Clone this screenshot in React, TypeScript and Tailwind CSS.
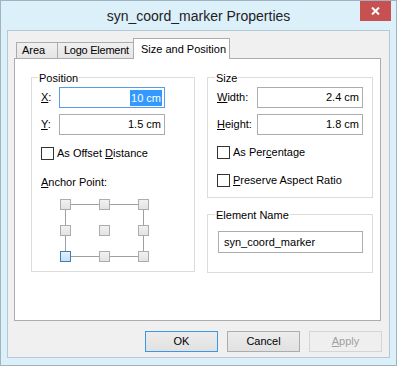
import React from 'react'

// Win8-style property dialog: "Size and Position" tab

const font = "font-['Liberation_Sans',Arial,sans-serif]"

function Field({ value, focused, align = 'right', className = '' }: { value: string; focused?: boolean; align?: 'left' | 'right'; className?: string }) {
  return (
    <div
      className={`flex items-center border bg-white ${focused ? 'border-[#569de5]' : 'border-[#acacac]'} ${align === 'right' ? 'justify-end pr-[2px]' : 'justify-start pl-[4px]'} ${className}`}
    >
      {focused ? (
        <span className="bg-[#3399ff] px-[1px] leading-[16px] text-white">{value}</span>
      ) : (
        <span className="px-[1px] text-[#000]">{value}</span>
      )}
    </div>
  )
}

function Check({ children, className = '' }: { children: React.ReactNode; className?: string }) {
  return (
    <div className={`flex h-[13px] items-center gap-[3px] ${className}`}>
      <div className="h-[13px] w-[13px] border border-[#333] bg-white" />
      <span className="leading-[13px]">{children}</span>
    </div>
  )
}

function GroupLabel({ children, className = '' }: { children: React.ReactNode; className?: string }) {
  return (
    <div className={`-mt-[7px] h-[14px] w-fit bg-white px-[1px] leading-[14px] ${className}`}>{children}</div>
  )
}

function AnchorGrid() {
  const cols = [0, 39, 78]
  const rows = [0, 26, 52]
  return (
    <svg width="89" height="63" viewBox="0 0 89 63">
      <g stroke="#a0a0a0" strokeWidth="1">
        <line x1="11" y1="5.5" x2="39" y2="5.5" />
        <line x1="50" y1="5.5" x2="78" y2="5.5" />
        <line x1="11" y1="57.5" x2="39" y2="57.5" />
        <line x1="50" y1="57.5" x2="78" y2="57.5" />
        <line x1="5.5" y1="11" x2="5.5" y2="26" />
        <line x1="5.5" y1="37" x2="5.5" y2="52" />
        <line x1="83.5" y1="11" x2="83.5" y2="26" />
        <line x1="83.5" y1="37" x2="83.5" y2="52" />
      </g>
      <defs>
        <linearGradient id="sq" x1="0" y1="0" x2="0" y2="1">
          <stop offset="0" stopColor="#f2f2f2" />
          <stop offset="1" stopColor="#e2e2e2" />
        </linearGradient>
        <linearGradient id="sqSel" x1="0" y1="0" x2="0" y2="1">
          <stop offset="0" stopColor="#e5f1fb" />
          <stop offset="1" stopColor="#c4e0fa" />
        </linearGradient>
      </defs>
      {rows.map((y, ri) =>
        cols.map((x, ci) => {
          const sel = ri === 2 && ci === 0
          return (
            <rect
              key={`${ri}-${ci}`}
              x={x + 0.5}
              y={y + 0.5}
              width="10"
              height="10"
              fill={sel ? 'url(#sqSel)' : 'url(#sq)'}
              stroke={sel ? '#3c7fb1' : '#acacac'}
            />
          )
        })
      )}
    </svg>
  )
}

export default function App() {
  return (
    <div className={`${font} flex h-[366px] w-[397px] flex-col border border-[#9fb3c2] bg-[#dcf0fa] text-[11px] text-black`}>
      {/* TITLE BAR */}
      <div className="grid h-[29px] grid-cols-[1fr_auto_1fr]">
        <div />
        <div className="self-center pt-[2px] text-[14px] text-[#222]">syn_coord_marker Properties</div>
        <div className="flex justify-end pr-[5px]">
          <div className="flex h-[20px] w-[31px] items-center justify-center bg-[#c75050]">
            <svg width="9" height="8" viewBox="0 0 9 8">
              <path d="M1 0.5 L8 7.5 M8 0.5 L1 7.5" stroke="#fff" strokeWidth="2" />
            </svg>
          </div>
        </div>
      </div>

      {/* CLIENT AREA */}
      <div className="mx-[6px] flex h-[328px] flex-col border border-[#b4c8d6] bg-[#f0f0f0]">
        {/* TABS */}
        <div className="mt-[7px] flex h-[20px] items-end pl-[8px]">
          <div className="flex h-[16px] w-[42px] items-center border border-b-0 border-[#acacac] bg-gradient-to-b from-[#f0f0f0] to-[#e5e5e5] pl-[5px]">
            Area
          </div>
          <div className="-ml-px flex h-[16px] w-[77px] items-center border border-b-0 border-[#acacac] bg-gradient-to-b from-[#f0f0f0] to-[#e5e5e5] pl-[6px] tracking-[-0.25px]">
            Logo Element
          </div>
          <div className="relative z-10 -mb-px -ml-px flex h-[21px] w-[97px] items-center border border-b-0 border-[#acacac] bg-white pl-[7px]">
            Size and Position
          </div>
        </div>

        {/* PANEL */}
        <div className="ml-[6px] flex h-[263px] w-[367px] gap-[12px] border border-[#acacac] bg-white pl-[16px] pt-[18px]">
          {/* POSITION */}
          <div className="flex h-[195px] w-[164px] flex-col border border-[#dcdcdc] pl-[9px]">
            <GroupLabel className="-ml-[3px]">Position</GroupLabel>
            <div className="mt-[2px] flex items-center">
              <span className="w-[18px]"><u>X</u>:</span>
              <Field value="10 cm" focused className="h-[21px] w-[106px]" />
            </div>
            <div className="mt-[6px] flex items-center">
              <span className="w-[18px]"><u>Y</u>:</span>
              <Field value="1.5 cm" className="h-[21px] w-[106px]" />
            </div>
            <Check className="mt-[12px]">
              As Offset <u>D</u>istance
            </Check>
            <div className="mt-[15px] h-[14px] leading-[14px]">
              <u>A</u>nchor Point:
            </div>
            <div className="ml-[19px] mt-[10px]">
              <AnchorGrid />
            </div>
          </div>

          {/* RIGHT COLUMN */}
          <div className="flex w-[166px] flex-col">
            <div className="flex h-[121px] flex-col border border-[#dcdcdc] pl-[9px]">
              <GroupLabel className="-ml-[2px]">Size</GroupLabel>
              <div className="mt-[2px] flex items-center">
                <span className="w-[40px]"><u>W</u>idth:</span>
                <Field value="2.4 cm" className="h-[21px] w-[106px]" />
              </div>
              <div className="mt-[6px] flex items-center">
                <span className="w-[40px]"><u>H</u>eight:</span>
                <Field value="1.8 cm" className="h-[21px] w-[106px]" />
              </div>
              <Check className="mt-[11px]">
                As Per<u>c</u>entage
              </Check>
              <Check className="mt-[15px]">
                <u>P</u>reserve Aspect Ratio
              </Check>
            </div>

            <div className="mt-[16px] flex h-[59px] flex-col border border-[#dcdcdc] pl-[10px]">
              <GroupLabel className="-ml-[3px]">Element Name</GroupLabel>
              <Field value="syn_coord_marker" align="left" className="mt-[9px] h-[22px] w-[145px]" />
            </div>
          </div>
        </div>

        {/* BUTTONS */}
        <div className="mt-[10px] flex justify-end gap-[9px] pr-[7px]">
          <button className="h-[21px] w-[73px] border border-[#3c96e6] bg-gradient-to-b from-[#ececec] to-[#e1e1e1] text-black">
            OK
          </button>
          <button className="h-[21px] w-[73px] border border-[#acacac] bg-gradient-to-b from-[#ececec] to-[#e1e1e1] text-black">
            Cancel
          </button>
          <button className="h-[21px] w-[73px] border border-[#d5d5d5] bg-[#efefef] text-[#a0a0a0]">
            <u>A</u>pply
          </button>
        </div>
      </div>
    </div>
  )
}
